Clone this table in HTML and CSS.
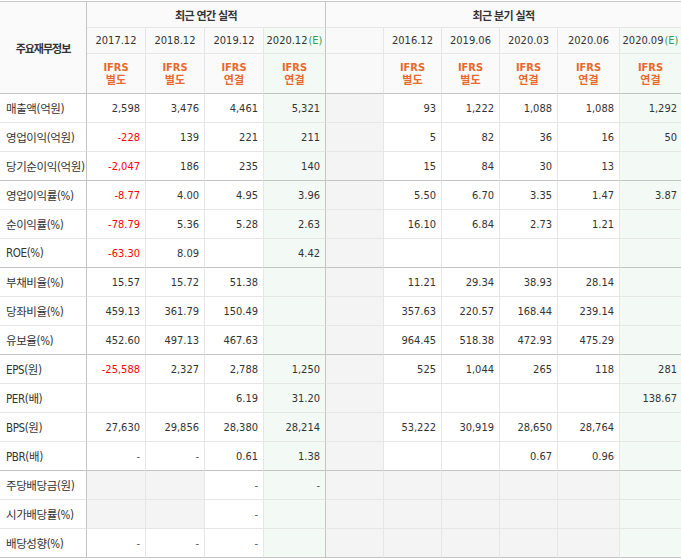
FILE: index.html
```html
<!DOCTYPE html>
<html lang="ko">
<head>
<meta charset="utf-8">
<title>기업실적분석</title>
<link rel="stylesheet" href="styles.css">
</head>
<body>
<div class="fin">
  <div class="row">
    <div class="c th title">주요재무정보</div>
    <div class="c th grp ae">최근 연간 실적</div>
    <div class="c th grp last">최근 분기 실적</div>
  </div>
  <div class="row">
    <div class="c th yr">2017.12</div>
    <div class="c th yr">2018.12</div>
    <div class="c th yr">2019.12</div>
    <div class="c th yr est ae">2020.12<em>(E)</em></div>
    <div class="c th sph"></div>
    <div class="c th yr">2016.12</div>
    <div class="c th yr">2019.06</div>
    <div class="c th yr">2020.03</div>
    <div class="c th yr">2020.06</div>
    <div class="c th yr est last">2020.09<em>(E)</em></div>
  </div>
  <div class="row sep">
    <div class="c th acc">IFRS<br>별도</div>
    <div class="c th acc">IFRS<br>별도</div>
    <div class="c th acc">IFRS<br>연결</div>
    <div class="c th acc est ae">IFRS<br>연결</div>
    <div class="c th sph"></div>
    <div class="c th acc">IFRS<br>별도</div>
    <div class="c th acc">IFRS<br>별도</div>
    <div class="c th acc">IFRS<br>연결</div>
    <div class="c th acc">IFRS<br>연결</div>
    <div class="c th acc est last">IFRS<br>연결</div>
  </div>

  <div class="row">
    <div class="c lbl">매출액(억원)</div>
    <div class="c n">2,598</div><div class="c n">3,476</div><div class="c n">4,461</div><div class="c n est ae">5,321</div>
    <div class="c sp"></div>
    <div class="c n">93</div><div class="c n">1,222</div><div class="c n">1,088</div><div class="c n">1,088</div><div class="c n est last">1,292</div>
  </div>
  <div class="row">
    <div class="c lbl">영업이익(억원)</div>
    <div class="c n neg">-228</div><div class="c n">139</div><div class="c n">221</div><div class="c n est ae">211</div>
    <div class="c sp"></div>
    <div class="c n">5</div><div class="c n">82</div><div class="c n">36</div><div class="c n">16</div><div class="c n est last">50</div>
  </div>
  <div class="row sep">
    <div class="c lbl">당기순이익(억원)</div>
    <div class="c n neg">-2,047</div><div class="c n">186</div><div class="c n">235</div><div class="c n est ae">140</div>
    <div class="c sp"></div>
    <div class="c n">15</div><div class="c n">84</div><div class="c n">30</div><div class="c n">13</div><div class="c n est last"></div>
  </div>

  <div class="row">
    <div class="c lbl">영업이익률(%)</div>
    <div class="c n neg">-8.77</div><div class="c n">4.00</div><div class="c n">4.95</div><div class="c n est ae">3.96</div>
    <div class="c sp"></div>
    <div class="c n">5.50</div><div class="c n">6.70</div><div class="c n">3.35</div><div class="c n">1.47</div><div class="c n est last">3.87</div>
  </div>
  <div class="row">
    <div class="c lbl">순이익률(%)</div>
    <div class="c n neg">-78.79</div><div class="c n">5.36</div><div class="c n">5.28</div><div class="c n est ae">2.63</div>
    <div class="c sp"></div>
    <div class="c n">16.10</div><div class="c n">6.84</div><div class="c n">2.73</div><div class="c n">1.21</div><div class="c n est last"></div>
  </div>
  <div class="row sep">
    <div class="c lbl">ROE(%)</div>
    <div class="c n neg">-63.30</div><div class="c n">8.09</div><div class="c n"></div><div class="c n est ae">4.42</div>
    <div class="c sp"></div>
    <div class="c n"></div><div class="c n"></div><div class="c n"></div><div class="c n"></div><div class="c n est last"></div>
  </div>

  <div class="row">
    <div class="c lbl">부채비율(%)</div>
    <div class="c n">15.57</div><div class="c n">15.72</div><div class="c n">51.38</div><div class="c n est ae"></div>
    <div class="c sp"></div>
    <div class="c n">11.21</div><div class="c n">29.34</div><div class="c n">38.93</div><div class="c n">28.14</div><div class="c n est last"></div>
  </div>
  <div class="row">
    <div class="c lbl">당좌비율(%)</div>
    <div class="c n">459.13</div><div class="c n">361.79</div><div class="c n">150.49</div><div class="c n est ae"></div>
    <div class="c sp"></div>
    <div class="c n">357.63</div><div class="c n">220.57</div><div class="c n">168.44</div><div class="c n">239.14</div><div class="c n est last"></div>
  </div>
  <div class="row sep">
    <div class="c lbl">유보율(%)</div>
    <div class="c n">452.60</div><div class="c n">497.13</div><div class="c n">467.63</div><div class="c n est ae"></div>
    <div class="c sp"></div>
    <div class="c n">964.45</div><div class="c n">518.38</div><div class="c n">472.93</div><div class="c n">475.29</div><div class="c n est last"></div>
  </div>

  <div class="row">
    <div class="c lbl">EPS(원)</div>
    <div class="c n neg">-25,588</div><div class="c n">2,327</div><div class="c n">2,788</div><div class="c n est ae">1,250</div>
    <div class="c sp"></div>
    <div class="c n">525</div><div class="c n">1,044</div><div class="c n">265</div><div class="c n">118</div><div class="c n est last">281</div>
  </div>
  <div class="row">
    <div class="c lbl">PER(배)</div>
    <div class="c n"></div><div class="c n"></div><div class="c n">6.19</div><div class="c n est ae">31.20</div>
    <div class="c sp"></div>
    <div class="c n"></div><div class="c n"></div><div class="c n"></div><div class="c n"></div><div class="c n est last">138.67</div>
  </div>
  <div class="row">
    <div class="c lbl">BPS(원)</div>
    <div class="c n">27,630</div><div class="c n">29,856</div><div class="c n">28,380</div><div class="c n est ae">28,214</div>
    <div class="c sp"></div>
    <div class="c n">53,222</div><div class="c n">30,919</div><div class="c n">28,650</div><div class="c n">28,764</div><div class="c n est last"></div>
  </div>
  <div class="row sep">
    <div class="c lbl">PBR(배)</div>
    <div class="c n dash">-</div><div class="c n dash">-</div><div class="c n">0.61</div><div class="c n est ae">1.38</div>
    <div class="c sp"></div>
    <div class="c n"></div><div class="c n"></div><div class="c n">0.67</div><div class="c n">0.96</div><div class="c n est last"></div>
  </div>

  <div class="row">
    <div class="c lbl">주당배당금(원)</div>
    <div class="c n nul"></div><div class="c n nul"></div><div class="c n dash">-</div><div class="c n dash est ae">-</div>
    <div class="c sp"></div>
    <div class="c n nul"></div><div class="c n nul"></div><div class="c n nul"></div><div class="c n nul"></div><div class="c n est last"></div>
  </div>
  <div class="row">
    <div class="c lbl">시가배당률(%)</div>
    <div class="c n nul"></div><div class="c n nul"></div><div class="c n dash">-</div><div class="c n est ae"></div>
    <div class="c sp"></div>
    <div class="c n nul"></div><div class="c n nul"></div><div class="c n nul"></div><div class="c n nul"></div><div class="c n est last"></div>
  </div>
  <div class="row sep">
    <div class="c lbl">배당성향(%)</div>
    <div class="c n dash">-</div><div class="c n dash">-</div><div class="c n dash">-</div><div class="c n est ae"></div>
    <div class="c sp"></div>
    <div class="c n nul"></div><div class="c n nul"></div><div class="c n nul"></div><div class="c n nul"></div><div class="c n est last"></div>
  </div>
</div>
</body>
</html>
```

FILE: styles.css
```css
html, body {
  margin: 0;
  padding: 0;
  background: #ffffff;
}

.fin {
  display: grid;
  grid-template-columns: 87px 59px 59px 59px 62px 58px 58px 58px 58px 62px 61px;
  grid-template-rows: 26px 26px 40px repeat(16, 29px);
  width: 681px;
  margin-top: 1px;
  border-top: 1px solid #c8c8c8;
  font-family: "DejaVu Sans Condensed", "Noto Sans CJK KR", sans-serif;
  font-size: 11px;
  color: #333333;
}

.row {
  display: contents;
}

.c {
  box-sizing: border-box;
  display: flex;
  align-items: center;
  border-right: 1px solid #e6e6e6;
  border-bottom: 1px solid #e6e6e6;
  background: #ffffff;
  overflow: hidden;
  white-space: nowrap;
}

.row.sep > .c {
  border-bottom-color: #c4c4c4;
}

.c.last {
  border-right: none;
}

.c.ae {
  border-right-color: #c4c4c4;
}

/* header cells */
.th {
  justify-content: center;
  text-align: center;
  background: #fafafa;
}

.title {
  grid-row: 1 / span 3;
  font-family: "Noto Sans CJK KR", sans-serif;
  font-weight: bold;
  letter-spacing: -1px;
  border-right-color: #c4c4c4;
  border-bottom-color: #c4c4c4;
}

.grp {
  font-family: "Noto Sans CJK KR", sans-serif;
  font-weight: bold;
  letter-spacing: -0.6px;
}

.grp.ae {
  grid-column: span 4;
}

.grp.last {
  grid-column: span 6;
}

.yr em {
  font-style: normal;
  color: #3a9a58;
  margin-left: 1px;
}

.acc {
  color: #e8692d;
  font-weight: bold;
  line-height: 13px;
  white-space: normal;
}

.sph {
  background: #f9f9f9;
}

/* body cells */
.lbl {
  padding-left: 6px;
  font-family: "DejaVu Sans Condensed", "Noto Sans CJK KR", sans-serif;
  font-size: 11.5px;
  letter-spacing: -0.4px;
  color: #333333;
  border-right-color: #c4c4c4;
}

.n {
  justify-content: flex-end;
  padding-right: 5px;
}

.n.last {
  padding-right: 4px;
}

.neg {
  color: #ff0000;
}

.dash {
  color: #555555;
}

.sp,
.nul {
  background: #f4f4f4;
}

.est {
  background: #f3f9f4;
}
```
